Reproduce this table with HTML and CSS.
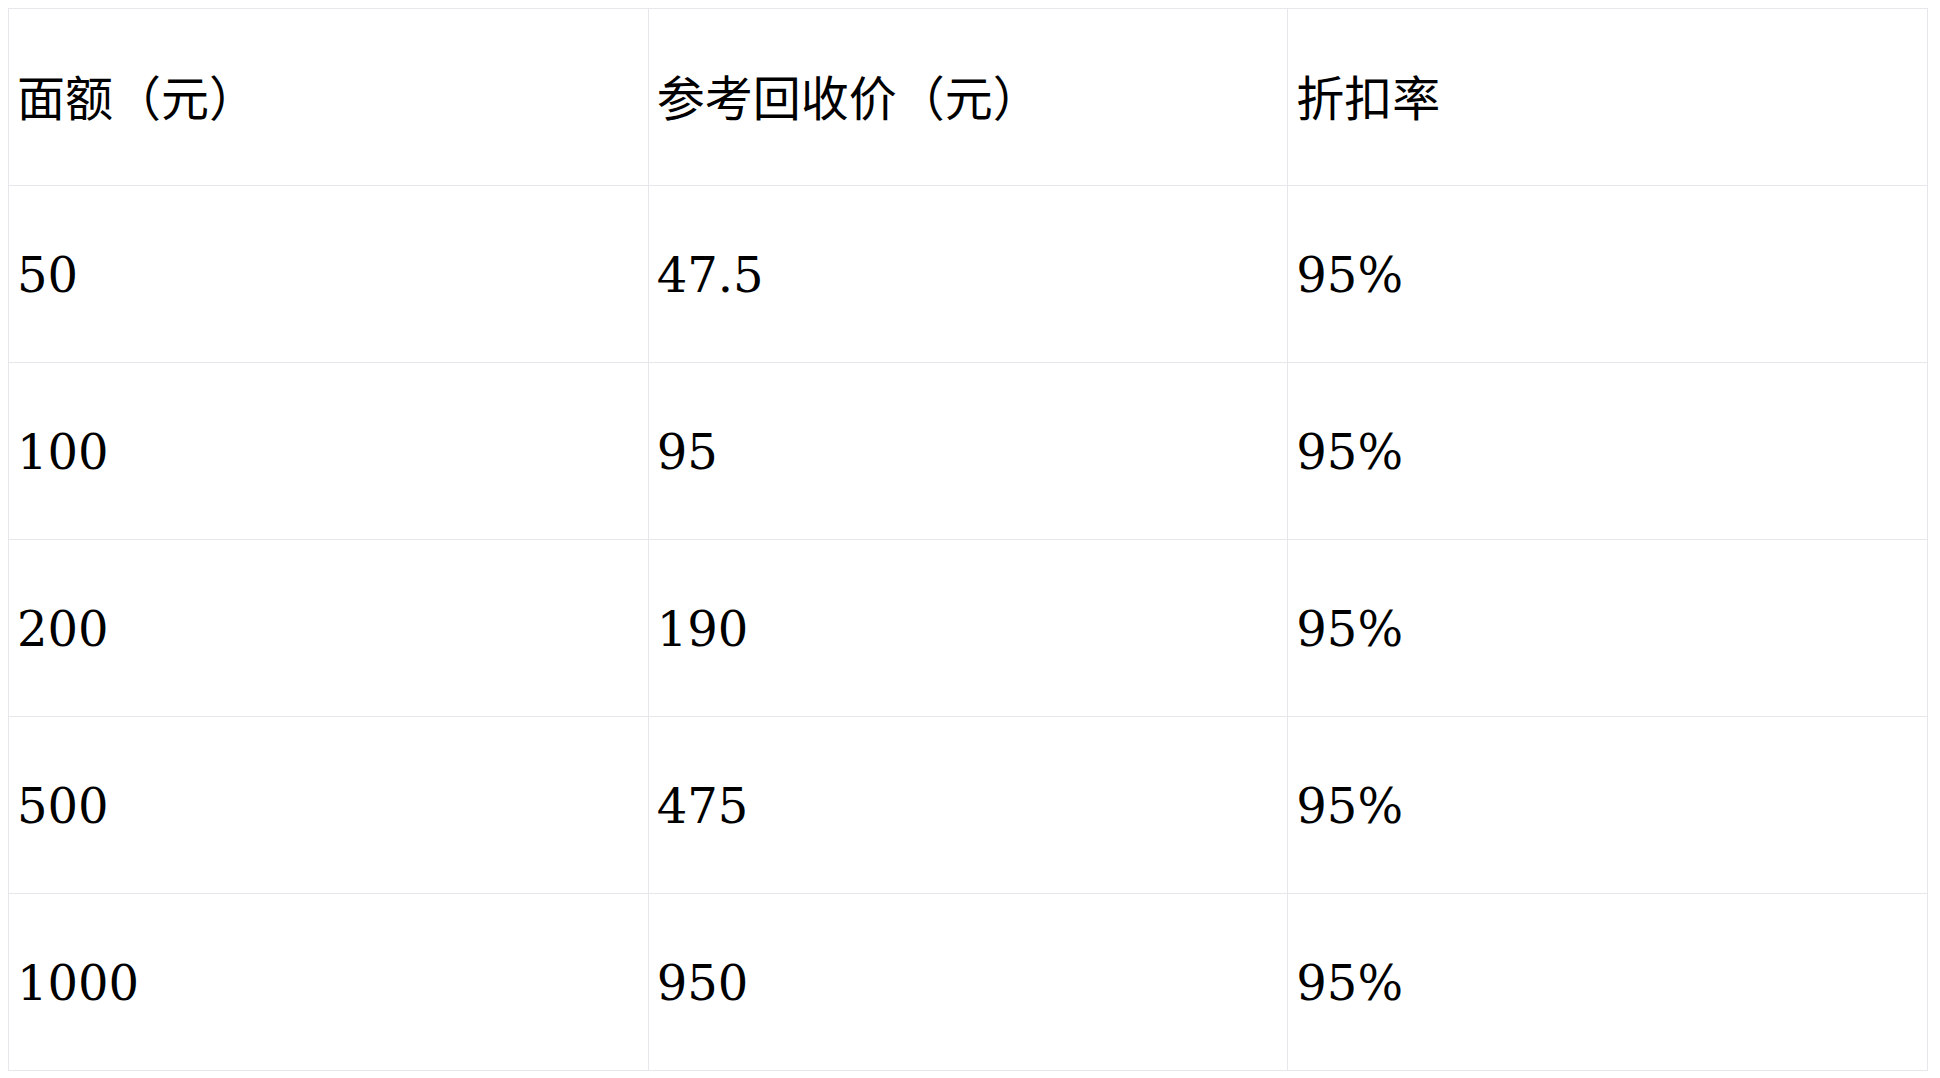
FILE: index.html
```html
<!DOCTYPE html>
<html lang="zh-CN">
<head>
<meta charset="utf-8">
<link rel="stylesheet" href="styles.css">
</head>
<body>
<table class="rates">
  <thead>
    <tr><th>面额（元）</th><th>参考回收价（元）</th><th>折扣率</th></tr>
  </thead>
  <tbody>
    <tr><td>50</td><td>47.5</td><td>95%</td></tr>
    <tr><td>100</td><td>95</td><td>95%</td></tr>
    <tr><td>200</td><td>190</td><td>95%</td></tr>
    <tr><td>500</td><td>475</td><td>95%</td></tr>
    <tr><td>1000</td><td>950</td><td>95%</td></tr>
  </tbody>
</table>
</body>
</html>
```

FILE: styles.css
```css
body {
  margin: 8px;
  background: #ffffff;
  font-family: "DejaVu Serif", "Noto Sans CJK SC", serif;
  color: #000000;
}
.rates {
  width: 1920px;
  border-collapse: collapse;
  table-layout: fixed;
}
.rates th,
.rates td {
  border: 1px solid #e5e7eb;
  text-align: left;
  vertical-align: middle;
  font-size: 48px;
  font-weight: normal;
  line-height: normal;
}
.rates th {
  height: 171px;
  padding: 0 8px 5px;
}
.rates td {
  height: 174px;
  padding: 2px 8px 0;
}
```
